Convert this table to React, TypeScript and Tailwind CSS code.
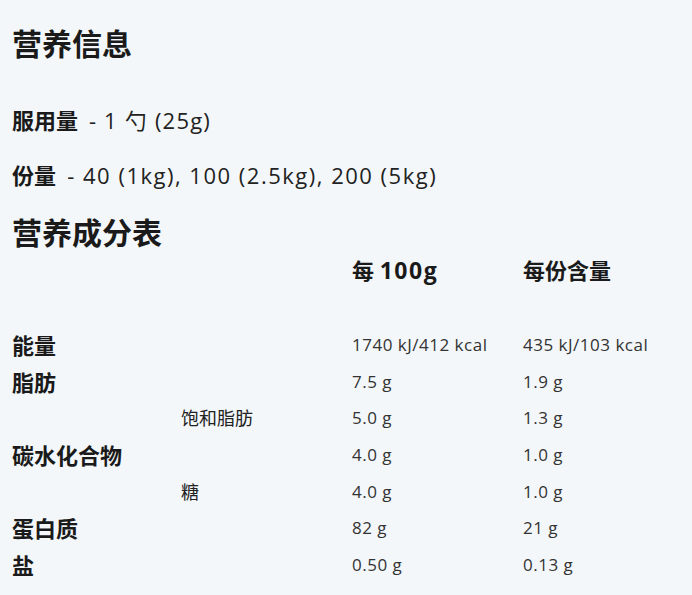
import React from "react";

const rows: { label: string; sub?: boolean; a: string; b: string }[] = [
  { label: "能量", a: "1740 kJ/412 kcal", b: "435 kJ/103 kcal" },
  { label: "脂肪", a: "7.5 g", b: "1.9 g" },
  { label: "饱和脂肪", sub: true, a: "5.0 g", b: "1.3 g" },
  { label: "碳水化合物", a: "4.0 g", b: "1.0 g" },
  { label: "糖", sub: true, a: "4.0 g", b: "1.0 g" },
  { label: "蛋白质", a: "82 g", b: "21 g" },
  { label: "盐", a: "0.50 g", b: "0.13 g" },
];

export default function App() {
  return (
    <div
      className="min-h-[595px] w-full bg-[#f3f7f9] pl-[12px] pt-[26px] text-[#1a1a1a]"
      style={{ fontFamily: "'Open Sans', 'Noto Sans CJK SC', sans-serif" }}
    >
      <h2 className="h-[36px] text-[30px] leading-[36px] font-bold">营养信息</h2>
      <p className="mt-[42px] h-[32px] text-[22px] leading-[32px]">
        <span className="font-bold">服用量</span>
        <span className="pl-[4px] tracking-[1.2px] text-[#222]"> - 1 勺 (25g)</span>
      </p>
      <p className="mt-[23px] h-[32px] text-[22px] leading-[32px]">
        <span className="font-bold">份量</span>
        <span className="pl-[4px] tracking-[1.5px] text-[#222]"> - 40 (1kg), 100 (2.5kg), 200 (5kg)</span>
      </p>
      <h2 className="mt-[24px] h-[36px] text-[30px] leading-[36px] font-bold">营养成分表</h2>
      <div className="mt-[1px] grid h-[36px] grid-cols-[169px_171px_171px_1fr] items-center text-[22px] leading-[36px] font-bold">
        <div />
        <div />
        <div>
          每 <span className="text-[23px] tracking-[1.5px]">100g</span>
        </div>
        <div>每份含量</div>
      </div>
      <div className="mt-[38.67px] flex flex-col">
        {rows.map((r) => (
          <div
            key={r.label}
            className="grid h-[36.67px] grid-cols-[169px_171px_171px_1fr] items-center leading-[36px]"
          >
            {r.sub ? (
              <>
                <div />
                <div className="text-[18px] text-[#222]">{r.label}</div>
              </>
            ) : (
              <>
                <div className="text-[22px] font-bold">{r.label}</div>
                <div />
              </>
            )}
            <div className="text-[17px] tracking-[0.5px] text-[#333]">{r.a}</div>
            <div className="text-[17px] tracking-[0.5px] text-[#333]">{r.b}</div>
          </div>
        ))}
      </div>
    </div>
  );
}
